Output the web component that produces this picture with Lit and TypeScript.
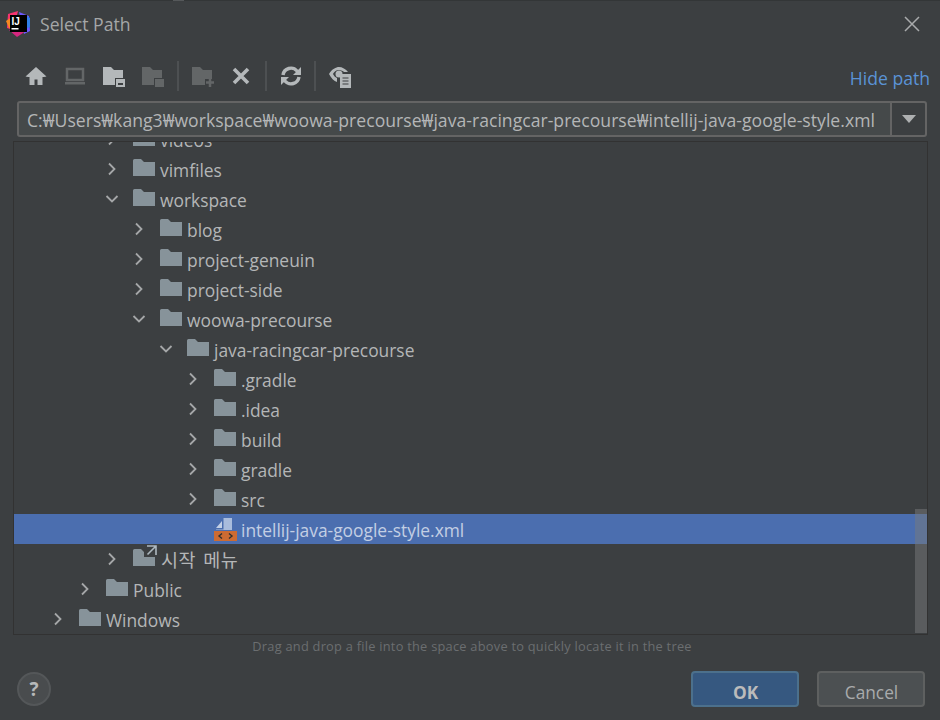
import { LitElement, html, css, svg } from "lit";
import { customElement } from "lit/decorators.js";

type Row = { name: string; level: number; state?: "open" | "closed" | "none"; kind?: "folder" | "link" | "xml"; selected?: boolean };

const rows: Row[] = [
  { name: "videos", level: 2, state: "closed" },
  { name: "vimfiles", level: 2, state: "closed" },
  { name: "workspace", level: 2, state: "open" },
  { name: "blog", level: 3, state: "closed" },
  { name: "project-geneuin", level: 3, state: "closed" },
  { name: "project-side", level: 3, state: "closed" },
  { name: "woowa-precourse", level: 3, state: "open" },
  { name: "java-racingcar-precourse", level: 4, state: "open" },
  { name: ".gradle", level: 5, state: "closed" },
  { name: ".idea", level: 5, state: "closed" },
  { name: "build", level: 5, state: "closed" },
  { name: "gradle", level: 5, state: "closed" },
  { name: "src", level: 5, state: "closed" },
  { name: "intellij-java-google-style.xml", level: 5, state: "none", kind: "xml", selected: true },
  { name: "시작 메뉴", level: 2, state: "closed", kind: "link" },
  { name: "Public", level: 1, state: "closed" },
  { name: "Windows", level: 0, state: "closed" },
];

const folderPath = "M0 1.500Q0 0 1.500 0H8l3 3h11v14H0z";

@customElement("app-root")
export class AppRoot extends LitElement {
  static styles = css`
    :host { display: block; width: 940px; height: 720px; overflow: hidden; }
    * { box-sizing: border-box; }
    .dialog {
      position: relative;
      width: 940px; height: 720px; background: #3c3f41; color: #b4b6b7;
      font-family: "Open Sans", "Noto Sans", "Noto Sans CJK KR", sans-serif; font-size: 17.6px;
      display: flex; flex-direction: column; border-top: 1px solid #333637;
    }
    .nick { position: absolute; left: 173px; top: -1px; width: 11px; height: 1px; background: #55585a; }
    .title { height: 47px; display: flex; align-items: center; padding: 0 20px 1px 5px; }
    .title .name { margin-left: 9px; color: #a5a7a8; flex: 1; }
    .close { display: block; }
    .tools { height: 53px; display: flex; align-items: center; padding: 2px 10px 0 24px; }
    .tool { width: 24px; height: 24px; display: block; flex: none; margin-right: 15px; }
    .sep { width: 2px; height: 30px; background: #4d5052; margin: 0 11px 0 -3px; flex: none; }
    .hide { margin-left: auto; color: #5a93d6; margin-top: 5px; }
    .path {
      margin: 0 13px 0 17px; height: 36px; flex: none; display: flex;
      border: 2px solid #646464; border-radius: 3px; background: #45494a;
    }
    .path .val { flex: 1; padding: 0 0 0 8px; line-height: 35px; color: #b4b6b7; white-space: nowrap; letter-spacing: 0.02px; }
    .path .drop { width: 35px; border-left: 2px solid #646464; background: #3c3f41; display: flex; align-items: center; justify-content: center; border-radius: 0 2px 2px 0; }
    .tree {
      position: relative; margin: 4px 12px 0 13px; height: 494px; flex: none;
      border: 1px solid #323232; overflow: hidden; background: #3c3f41;
    }
    .list { margin-top: -18px; }
    .row { height: 30px; display: flex; align-items: center; white-space: nowrap; color: #b4b6b7; font-size: 17.4px; }
    .row.sel { background: #4b6eaf; color: #c3cfe4; }
    .chev { width: 14px; height: 14px; flex: none; margin-right: 14px; display: block; }
    .chev.none { visibility: hidden; }
    .ico { flex: none; display: block; margin-right: 5px; margin-top: -3px; }
    .label { padding-top: 1px; }
    .label.xml { margin-left: -1px; }
    .label.kr { font-size: 18.500px; word-spacing: 2px; letter-spacing: 0.5px; margin-left: 1px; margin-top: -2px; }
    .bar { position: absolute; right: 0; top: 367px; width: 12px; height: 124px; background: rgba(120,122,124,0.5); }
    .hint { text-align: center; font-size: 12.800px; color: #6b6e70; height: 22px; line-height: 21px; padding-left: 4px; margin-top: 1px; letter-spacing: 0.02em; }
    .foot { display: flex; align-items: center; padding: 13px 15px 0 17px; }
    .help {
      width: 34px; height: 34px; border-radius: 50%; border: 2px solid #545759; background: #494c4e;
      display: flex; align-items: center; justify-content: center; font-weight: 700; font-size: 19px; color: #b6b8b9;
    }
    .btn {
      width: 108px; height: 36px; border-radius: 4px; border: 2px solid #5e6060; background: #4c5052;
      color: #a9abac; font-size: 17.3px; display: flex; align-items: center; justify-content: center; padding: 6px 0 0 1px;
    }
    .btn.ok { margin-left: auto; margin-right: 18px; background: #365880; border-color: #4c708c; color: #bbbbbb; font-weight: 700; }
  `;

  private folder() {
    return html`<svg class="ico" width="22" height="18" viewBox="0 0 22 18"><path d="${folderPath}" fill="#87939a"/></svg>`;
  }
  private linkFolder() {
    return html`<svg class="ico" width="22" height="18" viewBox="0 0 22 18" style="overflow:visible">
      <path d="${folderPath}" fill="#87939a"/>
      <rect x="11" y="-4" width="13" height="12" fill="#3c3f41"/>
      <path d="M14-3h9v9M22.500-2.500 14.500 5.500" fill="none" stroke="#aeb9c0" stroke-width="1.600"/>
    </svg>`;
  }
  private xml() {
    return html`<svg class="ico" width="23" height="24" viewBox="0 0 23 24" style="margin-top:-1px">
      <path d="M2 11 8 4v7z" fill="#c3d0e6"/><path d="M9.500 1H18v12H2v-.5h7.500z" fill="#a9bcdc"/>
      <rect x="0" y="14" width="23" height="10" fill="#cc6b33"/>
      <path d="M8 16.500 5 19l3 2.500M15 16.500l3 2.500-3 2.500" fill="none" stroke="#2f2f2f" stroke-width="1.400"/>
    </svg>`;
  }
  private chev(s: string) {
    const d = s === "open" ? "M1.500 4 7 9.500 12.500 4" : "M4 1.500 9.500 7 4 12.500";
    return html`<svg class="chev ${s === "none" ? "none" : ""}" viewBox="0 0 14 14"><path d="${d}" fill="none" stroke="#a5a7a8" stroke-width="1.800"/></svg>`;
  }

  private icon(body: unknown) {
    return html`<svg class="tool" viewBox="0 0 24 24">${body}</svg>`;
  }

  render() {
    const c = "#b4b8ba", d = "#636667";
    return html`<div class="dialog">
      <span class="nick"></span>
      <div class="title">
        <svg width="26" height="28" viewBox="0 0 26 28">
          <path d="M3 4 13 1 8 20 2 18z" fill="#f5336f"/>
          <path d="M1 11l6-4 2 12-5-1z" fill="#f58a1f"/>
          <path d="M14 2l10 4 1 15-6 3z" fill="#6b57ff"/>
          <path d="M4 20l8-2 9 3-9 6z" fill="#d6267f"/>
          <path d="M20 5l5 3v9l-5 2z" fill="#2f7fe8"/>
          <rect x="5" y="5" width="17" height="17" fill="#000"/>
          <text x="6.500" y="14.500" font-family="Liberation Sans" font-weight="700" font-size="10" fill="#fff">IJ</text>
          <rect x="6.500" y="18" width="7" height="1.500" fill="#fff"/>
        </svg>
        <span class="name">Select Path</span>
        <svg class="close" width="16" height="16" viewBox="0 0 16 16"><path d="M1 1l14 14M15 1 1 15" stroke="#a9abac" stroke-width="1.500" fill="none"/></svg>
      </div>
      <div class="tools">
        ${this.icon(svg`<path d="M12 3 1.500 12.500 4 13h1.500v8h5v-5.500h3V21h5v-8H20l2.500-.5z" fill="${c}"/>`)}
        ${this.icon(svg`<rect x="4" y="5" width="16" height="11" fill="none" stroke="${d}" stroke-width="2.500"/><rect x="2" y="18" width="20" height="2.500" fill="${d}"/>`)}
        ${this.icon(svg`<path d="M1 3h8l3 3h9v8h-8v7H1z" fill="${c}"/><rect x="14" y="15" width="9" height="8" fill="${c}"/><rect x="16" y="19" width="5" height="2" fill="#3c3f41"/>`)}
        ${this.icon(svg`<path d="M1 3h8l3 3h9v8h-8v7H1z" fill="${d}"/><rect x="14" y="15" width="9" height="8" fill="${d}"/>`)}
        <span class="sep"></span>
        ${this.icon(svg`<path d="M2 3h8l3 3h9v9h-7v6H2z" fill="${d}"/><path d="M20 14v9M16 18.500h8" stroke="${d}" stroke-width="2.500" fill="none"/>`)}
        ${this.icon(svg`<path d="M5 5l14 14M19 5 5 19" stroke="${c}" stroke-width="3.600" fill="none"/>`)}
        <span class="sep"></span>
        ${this.icon(svg`<g transform="translate(1 0)"><path d="M4 11a8 8 0 0 1 14-4l1.500 2" fill="none" stroke="${c}" stroke-width="3.400"/><path d="M22 3v8h-8z" fill="${c}"/><path d="M20 13a8 8 0 0 1-14 4l-1.500-2" fill="none" stroke="${c}" stroke-width="3.400"/><path d="M2 21v-8h8z" fill="${c}"/></g>`)}
        <span class="sep"></span>
        ${this.icon(svg`<g transform="translate(1 0)"><path d="M1 10c3-5 7-7 10-7s7 2 9 5h-4c-1-1-3-2-5-2-3 0-5 2-6 4 1 2 2 3 4 4v4C6 17 3 14 1 10z" fill="${c}"/><circle cx="11" cy="10" r="3.500" fill="${c}"/><rect x="12" y="10" width="11" height="14" fill="${c}"/><path d="M14.500 14h6M14.500 17h6M14.500 20h6" stroke="#3c3f41" stroke-width="1.200"/></g>`)}
        <span class="hide">Hide path</span>
      </div>
      <div class="path">
        <div class="val">C:₩Users₩kang3₩workspace₩woowa-precourse₩java-racingcar-precourse₩intellij-java-google-style.xml</div>
        <div class="drop"><svg width="14" height="8" viewBox="0 0 14 8"><path d="M0 0h14L7 8z" fill="#aeb0b1"/></svg></div>
      </div>
      <div class="tree">
        <div class="list">
          ${rows.map(
            (r) => html`<div class="row ${r.selected ? "sel" : ""}" style="padding-left:${37 + 27 * r.level}px">
              ${this.chev(r.state ?? "closed")}
              ${r.kind === "xml" ? this.xml() : r.kind === "link" ? this.linkFolder() : this.folder()}
              <span class="label ${r.kind === "link" ? "kr" : r.kind === "xml" ? "xml" : ""}">${r.name}</span>
            </div>`
          )}
        </div>
        <div class="bar"></div>
      </div>
      <div class="hint">Drag and drop a file into the space above to quickly locate it in the tree</div>
      <div class="foot">
        <div class="help">?</div>
        <div class="btn ok">OK</div>
        <div class="btn">Cancel</div>
      </div>
    </div>`;
  }
}
